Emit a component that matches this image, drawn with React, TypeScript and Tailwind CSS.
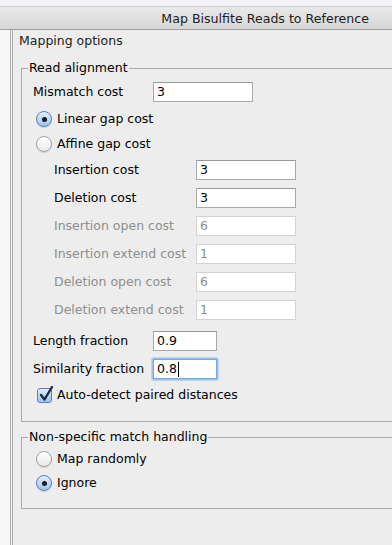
import React from "react";

const FONT = { fontFamily: '"DejaVu Sans", "Lucida Grande", Verdana, sans-serif' };

function Radio({ on }: { on?: boolean }) {
  return on ? (
    <div className="w-[16px] h-[16px] rounded-full border border-[#5a7fb8] bg-[linear-gradient(#e3eefb,#9cc4ef)] flex items-center justify-center shadow-[0_1px_1px_rgba(0,0,0,0.15)] shrink-0">
      <div className="w-[5px] h-[5px] rounded-full bg-[#1b1b1b]" />
    </div>
  ) : (
    <div className="w-[16px] h-[16px] rounded-full border border-[#a2a2a2] bg-[linear-gradient(#ffffff,#e9e9e9)] shadow-[0_1px_1px_rgba(0,0,0,0.12)] shrink-0" />
  );
}

function Input({ value, w, disabled, focused }: { value: string; w: string; disabled?: boolean; focused?: boolean }) {
  const base = "h-[20px] bg-white flex items-center pl-[3px] text-[12.5px] border";
  if (focused) {
    return (
      <div className="rounded-[3px] p-[1px] bg-[#9cc3f0] -m-[2px] border border-[#b9d5f5]">
        <div className={`${base} ${w} border-[#7aa6de] text-black`}>
          {value}
          <span className="inline-block w-[1px] h-[15px] bg-black ml-[1px]" />
        </div>
      </div>
    );
  }
  return (
    <div
      className={`${base} ${w} ${
        disabled ? "border-[#d3d3d3] text-[#8e8e8e]" : "border-[#a8a8a8] border-t-[#9a9a9a] text-black"
      }`}
    >
      {value}
    </div>
  );
}

function Row({ h, children, pl = "pl-[11px]" }: { h: string; children: React.ReactNode; pl?: string }) {
  return <div className={`flex items-center ${h} ${pl}`}>{children}</div>;
}

export default function App() {
  return (
    <div className="w-[392px] h-[545px] overflow-hidden bg-[#ededed] text-[12.5px] text-black" style={FONT}>
      {/* top strip */}
      <div className="h-[7px] bg-[#f3f3f7] border-b border-[#cfcfd3]" />
      {/* header */}
      <div className="h-[23px] pt-[2px] bg-[linear-gradient(#e9e9e9,#d6d6d6)] border-b border-[#a0a0a0] flex items-center justify-end pr-[23px] text-[12.6px] text-[#1e1e1e]">
        Map Bisulfite Reads to Reference
      </div>
      <div className="flex h-[515px]">
        <div className="w-[10px] bg-[#f6f6f6]" />
        <div className="w-[3px] border-l border-r border-[#acacac] bg-[#f2f2f2]" />
        <div className="flex-1 flex flex-col">
          <div className="h-[19px] mt-[2px] pl-[6px] flex items-center text-[#222]">Mapping options</div>

          <fieldset className="ml-[8px] -mr-[20px] mt-[10px] border border-[#aaaaaa] pb-[10px]">
            <legend className="ml-[6px] px-[1px] leading-[14px] text-black">Read alignment</legend>
            <Row h="h-[28px] mt-[3px]">
              <span className="w-[120px]">Mismatch cost</span>
              <Input value="3" w="w-[100px]" />
            </Row>
            <Row h="h-[26px]" pl="pl-[14px]">
              <Radio on />
              <span className="ml-[5px]">Linear gap cost</span>
            </Row>
            <Row h="h-[24px]" pl="pl-[14px]">
              <Radio />
              <span className="ml-[5px]">Affine gap cost</span>
            </Row>
            <Row h="h-[28px]" pl="pl-[32px]">
              <span className="w-[142px]">Insertion cost</span>
              <Input value="3" w="w-[100px]" />
            </Row>
            <Row h="h-[28px]" pl="pl-[32px]">
              <span className="w-[142px]">Deletion cost</span>
              <Input value="3" w="w-[100px]" />
            </Row>
            <Row h="h-[28px]" pl="pl-[32px]">
              <span className="w-[142px] text-[#8e8e8e]">Insertion open cost</span>
              <Input value="6" w="w-[100px]" disabled />
            </Row>
            <Row h="h-[28px]" pl="pl-[32px]">
              <span className="w-[142px] text-[#8e8e8e]">Insertion extend cost</span>
              <Input value="1" w="w-[100px]" disabled />
            </Row>
            <Row h="h-[28px]" pl="pl-[32px]">
              <span className="w-[142px] text-[#8e8e8e]">Deletion open cost</span>
              <Input value="6" w="w-[100px]" disabled />
            </Row>
            <Row h="h-[28px]" pl="pl-[32px]">
              <span className="w-[142px] text-[#8e8e8e]">Deletion extend cost</span>
              <Input value="1" w="w-[100px]" disabled />
            </Row>
            <Row h="h-[34px]">
              <span className="w-[120px]">Length fraction</span>
              <Input value="0.9" w="w-[64px]" />
            </Row>
            <Row h="h-[22px]">
              <span className="w-[120px]">Similarity fraction</span>
              <Input value="0.8" w="w-[64px]" focused />
            </Row>
            <Row h="h-[31px]" pl="pl-[15px]">
              <div className="relative w-[15px] h-[15px] rounded-[3px] border border-[#5a7fb8] bg-[linear-gradient(#e3eefb,#9cc4ef)] shrink-0">
                <svg className="absolute -top-[3px] left-[1px] overflow-visible" width="15" height="16" viewBox="0 0 15 16">
                  <path d="M2 9 L5.5 13.5 L13 1" fill="none" stroke="#1c2a48" strokeWidth="2.4" strokeLinecap="round" strokeLinejoin="round" />
                </svg>
              </div>
              <span className="ml-[5px]">Auto-detect paired distances</span>
            </Row>
          </fieldset>

          <fieldset className="ml-[8px] -mr-[20px] mt-[8px] border border-[#aaaaaa] pb-[13px]">
            <legend className="ml-[6px] px-[1px] leading-[14px] text-black">Non-specific match handling</legend>
            <Row h="h-[24px] mt-[3px]" pl="pl-[14px]">
              <Radio />
              <span className="ml-[5px]">Map randomly</span>
            </Row>
            <Row h="h-[24px]" pl="pl-[14px]">
              <Radio on />
              <span className="ml-[5px]">Ignore</span>
            </Row>
          </fieldset>
        </div>
      </div>
    </div>
  );
}
